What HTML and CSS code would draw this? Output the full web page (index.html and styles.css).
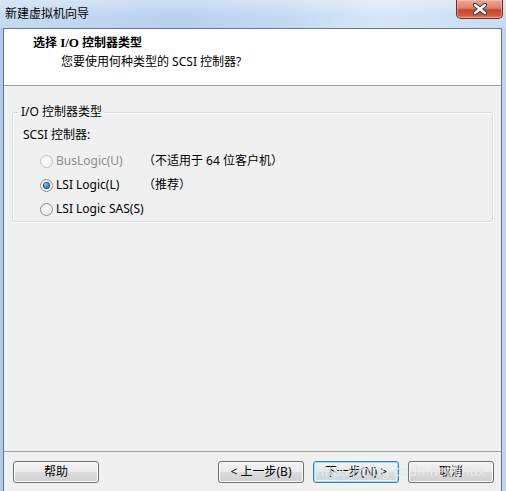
FILE: index.html
```html
<!DOCTYPE html>
<html lang="zh-CN">
<head>
<meta charset="utf-8">
<title>新建虚拟机向导</title>
<link rel="stylesheet" href="styles.css">
</head>
<body>
<div class="window">
  <div class="titlebar">
    <span class="title">新建虚拟机向导</span>
    <div class="close">
      <svg width="16" height="12" viewBox="0 0 16 12">
        <path d="M3 2 L13 10 M13 2 L3 10" stroke="#3a3a3a" stroke-width="4.2" stroke-linecap="round"/>
        <path d="M3 2 L13 10 M13 2 L3 10" stroke="#ffffff" stroke-width="2.4" stroke-linecap="round"/>
      </svg>
    </div>
  </div>
  <div class="client">
    <div class="header">
      <div class="h-title">选择 <span class="serif">I/O</span> 控制器类型</div>
      <div class="h-sub">您要使用何种类型的 SCSI 控制器?</div>
    </div>
    <div class="body">
      <fieldset class="group">
        <legend>I/O 控制器类型</legend>
        <div class="label">SCSI 控制器:</div>
        <div class="options">
          <div class="opt disabled">
            <span class="radio"></span><span class="opt-text">BusLogic(U)</span>
            <span class="note">（不适用于 64 位客户机）</span>
          </div>
          <div class="opt">
            <span class="radio checked"></span><span class="opt-text">LSI Logic(L)</span>
            <span class="note">（推荐）</span>
          </div>
          <div class="opt">
            <span class="radio"></span><span class="opt-text">LSI Logic SAS(S)</span>
          </div>
        </div>
      </fieldset>
    </div>
    <div class="footer">
      <button class="btn">帮助</button>
      <div class="spacer"></div>
      <button class="btn">&lt; 上一步(B)</button>
      <button class="btn default">下一步(N) &gt;</button>
      <button class="btn">取消</button>
      <div class="watermark">https://blog.csdn.net/linux</div>
    </div>
  </div>
</div>
</body>
</html>
```
FILE: styles.css
```css
html, body {
  margin: 0;
  padding: 0;
  width: 506px;
  height: 491px;
  overflow: hidden;
}

body {
  font-family: "Noto Sans", "Noto Sans CJK SC", sans-serif;
  font-size: 12px;
  line-height: 16px;
  color: #000;
}

.window {
  width: 506px;
  height: 491px;
  display: flex;
  flex-direction: column;
  background: linear-gradient(to right, #aecbee 0%, #b9d3f0 40%, #cadff5 75%, #bcd5f1 100%);
}

.titlebar {
  height: 28px;
  display: flex;
  align-items: flex-start;
  background:
    linear-gradient(to bottom, rgba(255,255,255,0.35), rgba(255,255,255,0) 60%),
    linear-gradient(to right, #c6dbf2 0%, #b7d0ee 35%, #c2d9f2 55%, #d6e6f7 75%, #c8dcf3 100%);
}

.title {
  padding: 6px 0 0 5px;
  line-height: 16px;
  color: #000;
}

.close {
  margin-left: auto;
  margin-right: 3px;
  width: 45px;
  height: 18px;
  border: 1px solid #6e2a1f;
  border-top: none;
  border-radius: 0 0 5px 5px;
  background: linear-gradient(to bottom, #e9a898 0%, #dd806a 45%, #c4472f 55%, #cf5a3f 85%, #e08a6e 100%);
  box-shadow: inset 0 0 0 1px rgba(255,200,180,0.5);
  display: flex;
  align-items: center;
  justify-content: center;
}

.close svg {
  display: block;
}

.client {
  flex: 1;
  margin: 0 4px 0 3px;
  border: 1px solid #66768a;
  border-bottom: none;
  background: #f0f0f0;
  display: flex;
  flex-direction: column;
}

.header {
  background: #ffffff;
  border-bottom: 1px solid #a0a0a0;
  padding: 6px 0 0 29px;
  box-sizing: content-box;
  height: 50px;
}

.h-title {
  font-weight: bold;
}

.serif {
  font-family: "Liberation Serif", serif;
  font-size: 13px;
}

.h-sub {
  margin-top: 3px;
  padding-left: 28px;
}

.body {
  flex: 1;
  padding: 18px 8px 0 8px;
}

.group {
  margin: 0;
  padding: 7px 10px 0 10px;
  border: 1px solid #d5dfe5;
  border-radius: 3px;
  box-shadow: inset 1px 1px 0 #ffffff, 1px 1px 0 #ffffff;
  min-width: 0;
}

.group legend {
  padding: 0 2px;
  margin-left: -4px;
  line-height: 16px;
}

.label {
  margin-bottom: 6px;
}

.options {
  padding-left: 17px;
}

.opt {
  height: 24px;
  display: flex;
  align-items: center;
  white-space: nowrap;
}

.radio {
  width: 11px;
  height: 11px;
  border: 1px solid #8d8e8f;
  border-radius: 50%;
  background: radial-gradient(circle at 40% 40%, #ffffff 0%, #eaeaea 50%, #c9c9c9 100%);
  box-shadow: inset 0 0 0 1px #f4f4f4;
  display: flex;
  align-items: center;
  justify-content: center;
  flex: none;
}

.radio.checked::after {
  content: "";
  width: 5px;
  height: 5px;
  border-radius: 50%;
  background: radial-gradient(circle at 40% 35%, #8fdcff 0%, #2a8fd0 45%, #0e4e7c 100%);
  box-shadow: 0 0 0 1px #1b4f74;
}

.opt-text {
  margin-left: 3px;
  min-width: 87px;
  flex: none;
  white-space: nowrap;
}

.note {
  white-space: nowrap;
}

.disabled .radio {
  border-color: #c2c4c6;
  background: radial-gradient(circle at 40% 40%, #fbfbfb 0%, #f2f2f2 60%, #e4e4e4 100%);
}

.disabled .opt-text {
  color: #8d8d8d;
}

.footer {
  position: relative;
  height: 40px;
  box-sizing: border-box;
  border-top: 1px solid #a0a0a0;
  padding: 9px 7px 0 9px;
  display: flex;
  align-items: flex-start;
  gap: 9px;
}

.spacer {
  flex: 1;
}

.btn {
  width: 86px;
  height: 22px;
  padding: 0;
  font: inherit;
  line-height: 16px;
  color: #000;
  border: 1px solid #707070;
  border-radius: 3px;
  background: linear-gradient(to bottom, #f2f2f2 0%, #ebebeb 50%, #dddddd 51%, #cfcfcf 100%);
  box-shadow: inset 0 0 0 1px #fbfbfb;
}

.btn.default {
  border-color: #3c7fb1;
  box-shadow: inset 0 0 0 1px #9ddcf7, inset 0 0 0 2px #e6f4fb;
  background: linear-gradient(to bottom, #f0f3f5 0%, #e7ecef 50%, #d8dfe3 51%, #cdd5da 100%);
}

.watermark {
  position: absolute;
  left: 312px;
  top: 10px;
  font-family: "Liberation Sans", sans-serif;
  font-size: 15px;
  line-height: 18px;
  color: rgba(255, 255, 255, 0.7);
  text-shadow: 0 0 1px rgba(120, 120, 120, 0.35);
  pointer-events: none;
  white-space: nowrap;
}
```
